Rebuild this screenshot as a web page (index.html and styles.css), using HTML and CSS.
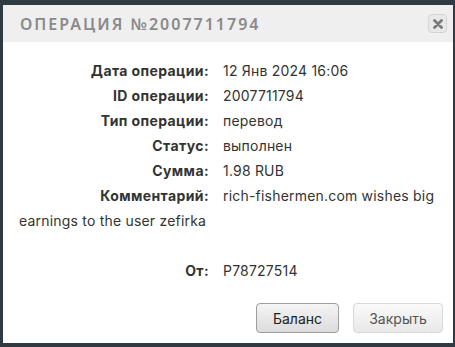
FILE: index.html
```html
<!DOCTYPE html>
<html lang="ru">
<head>
  <meta charset="UTF-8" />
  <title>Операция №2007711794</title>
  <link rel="stylesheet" href="styles.css">
</head>
<body>
  <div class="dialog">
    <div class="dialog-head">
      <span class="dialog-title">Операция №2007711794</span>
      <button class="close-btn" title="Закрыть">
        <svg width="10" height="10" viewBox="0 0 10 10"><path d="M1.5 1.5 L8.5 8.5 M8.5 1.5 L1.5 8.5" stroke="#7a7a7a" stroke-width="2.8" stroke-linecap="round"/></svg>
      </button>
    </div>

    <div class="dialog-body">
      <div class="row"><span class="label">Дата операции:</span><span class="value">12 Янв 2024 16:06</span></div>
      <div class="row"><span class="label">ID операции:</span><span class="value">2007711794</span></div>
      <div class="row"><span class="label">Тип операции:</span><span class="value">перевод</span></div>
      <div class="row"><span class="label">Статус:</span><span class="value">выполнен</span></div>
      <div class="row"><span class="label">Сумма:</span><span class="value">1.98 RUB</span></div>
      <div class="row"><span class="label">Комментарий:</span><span class="value">rich-fishermen.com wishes big earnings to the user zefirka</span></div>
      <div class="row empty"></div>
      <div class="row"><span class="label">От:</span><span class="value">P78727514</span></div>
    </div>

    <div class="dialog-foot">
      <button class="btn btn-main">Баланс</button>
      <button class="btn btn-light">Закрыть</button>
    </div>
  </div>
</body>
</html>
```

FILE: styles.css
```css
html, body {
  margin: 0;
  padding: 0;
  height: 100%;
}

body {
  background: #2f3a42;
  font-family: 'Inter', sans-serif;
  padding: 5px 2px 4px 3px;
  box-sizing: border-box;
}

.dialog {
  background: #fff;
  height: 338px;
  display: flex;
  flex-direction: column;
}

.dialog-head {
  background: #efefef;
  height: 37px;
  display: flex;
  align-items: center;
  justify-content: space-between;
  padding: 0 6px 0 17px;
}

.dialog-title {
  text-transform: uppercase;
  color: #8a8a8a;
  font-family: 'Noto Sans', sans-serif;
  font-size: 16px;
  font-weight: 600;
  letter-spacing: 2px;
}

.close-btn {
  width: 19px;
  height: 19px;
  padding: 0;
  border: 1px solid #d3d3d3;
  border-radius: 4px;
  background: #e9e9e9;
  display: flex;
  align-items: center;
  justify-content: center;
}

.dialog-body {
  padding: 16px 14px 0 16px;
  font-size: 14px;
  line-height: 25px;
  color: #333;
  flex: 1;
}

.value {
  letter-spacing: 0.2px;
}

.row.empty {
  height: 25px;
}

.label {
  display: inline-block;
  width: 190px;
  text-align: right;
  font-weight: 700;
  letter-spacing: 0.4px;
  margin-right: 14px;
}

.dialog-foot {
  display: flex;
  justify-content: flex-end;
  gap: 14px;
  padding: 0 10px 10px 0;
}

.btn {
  height: 30px;
  font-family: 'Inter', sans-serif;
  font-size: 14px;
  border-radius: 4px;
  padding: 0 12px;
}

.btn-main {
  width: 83px;
  color: #222;
  border: 1px solid #9e9e9e;
  background: linear-gradient(#f4f4f4, #dcdcdc);
}

.btn-light {
  width: 90px;
  color: #555;
  border: 1px solid #d8d8d8;
  background: linear-gradient(#fafafa, #e8e8e8);
}
```
